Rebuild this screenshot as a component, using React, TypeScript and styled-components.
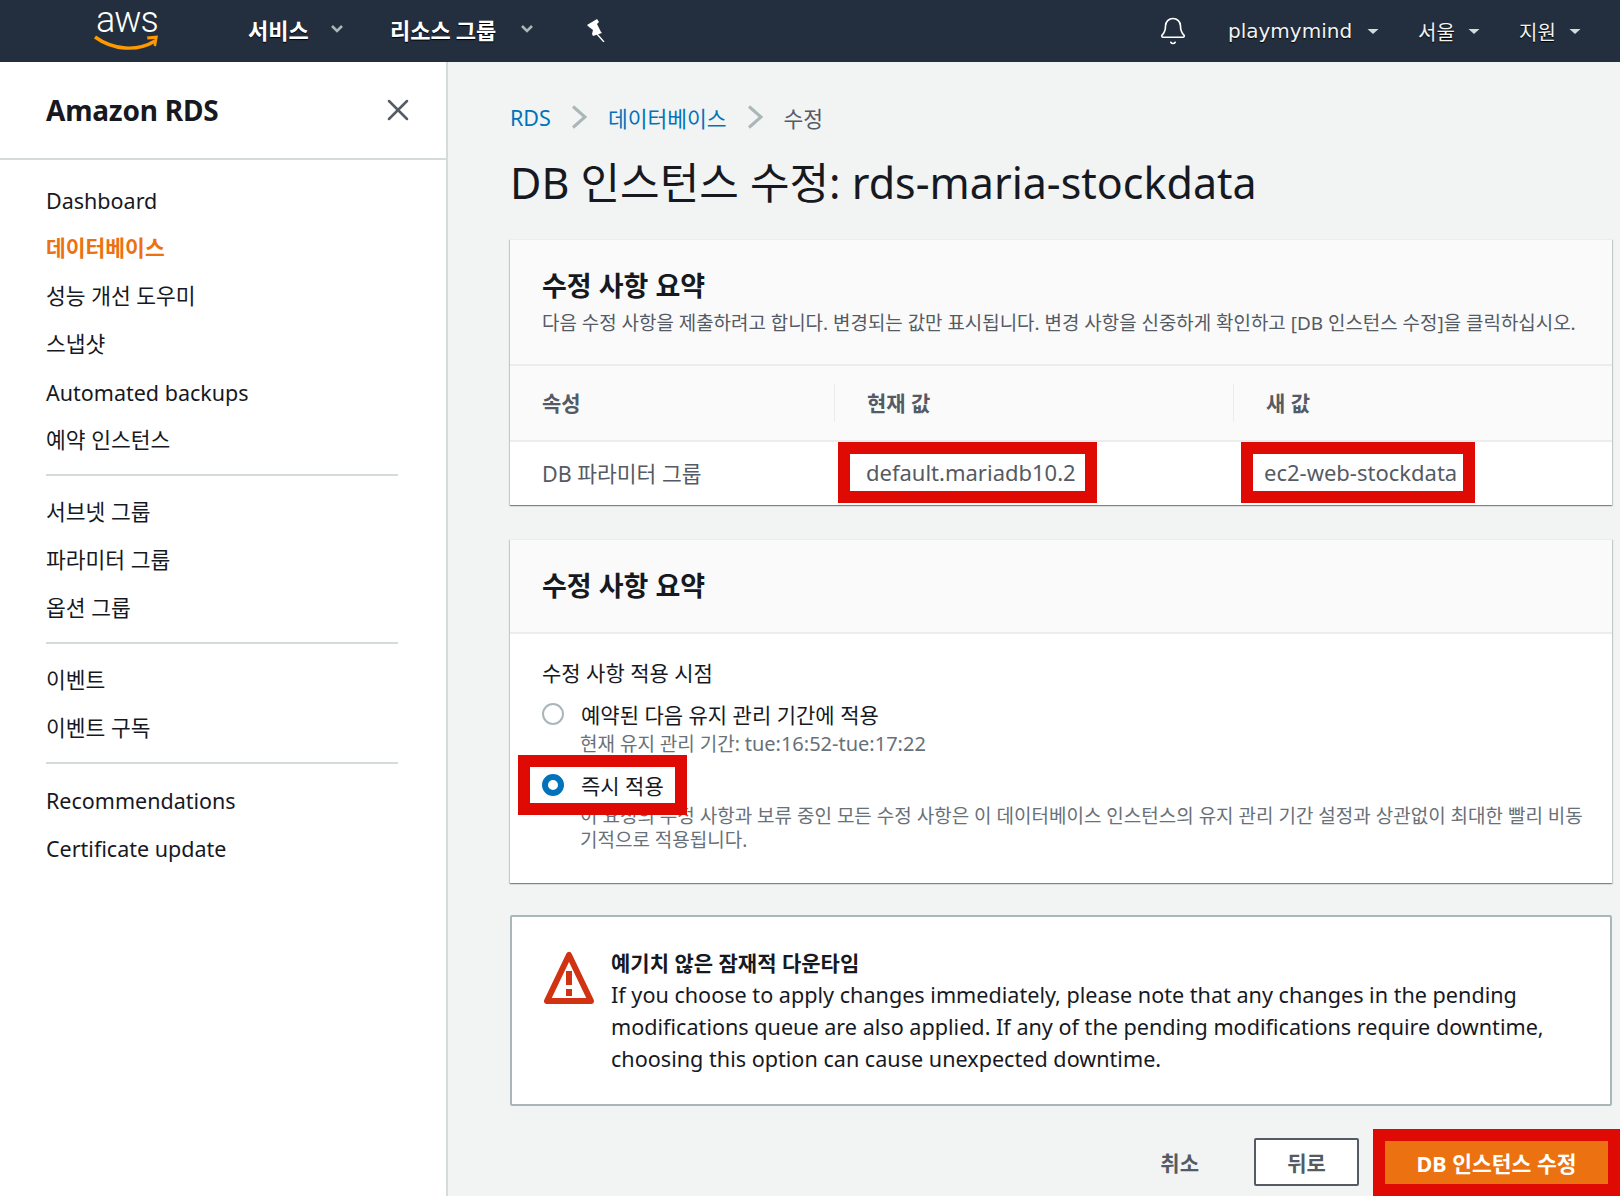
import { ReactNode } from 'react'
import styled, { createGlobalStyle } from 'styled-components'
import { Bell, X } from 'lucide-react'

const GlobalStyle = createGlobalStyle`
  html, body {
    margin: 0;
    padding: 0;
    background: #f2f3f3;
  }
  body {
    font-family: 'Noto Sans', 'Noto Sans CJK KR', sans-serif;
    color: #16191f;
  }
  * {
    box-sizing: border-box;
  }
`

const Page = styled.div`
  width: 1620px;
  height: 1196px;
  overflow: hidden;
  display: grid;
  grid-template-rows: 62px 1fr;
  grid-template-columns: 448px 1fr;
  grid-template-areas:
    'top top'
    'side main';
`

const TopBar = styled.header`
  grid-area: top;
  background: #232f3e;
  display: flex;
  align-items: center;
  color: #fff;
`

const LogoBox = styled.div`
  width: 248px;
  height: 62px;
  padding: 3px 0 0 94px;
  display: flex;
  flex-direction: column;
  align-items: flex-start;
`

const LogoText = styled.span`
  font-family: 'Roboto', sans-serif;
  font-size: 36px;
  font-weight: 300;
  line-height: 34px;
  letter-spacing: -1px;
  margin-left: 2px;
`

const Smile = styled.svg`
  width: 66px;
  height: 20px;
  margin-top: -3px;
`

const TopMenu = styled.button<{ $gap: number; $width: number }>`
  all: unset;
  display: flex;
  align-items: center;
  gap: ${(p) => p.$gap}px;
  width: ${(p) => p.$width}px;
  padding-bottom: 5px;
  font-family: 'Noto Sans CJK KR', sans-serif;
  font-size: 22px;
  font-weight: 700;
  text-shadow: 0 1px 1px #000;
`

const PinIcon = styled.svg`
  width: 18px;
  height: 23px;
  margin: 0 0 2px 3px;
`

const TopRight = styled.div`
  margin-left: auto;
  display: flex;
  align-items: center;
`

const UserMenu = styled.button<{ $width: number; $gap: number }>`
  all: unset;
  display: flex;
  align-items: center;
  gap: ${(p) => p.$gap}px;
  width: ${(p) => p.$width}px;
  font-family: 'DejaVu Sans', 'Noto Sans CJK KR', sans-serif;
  font-size: 20px;
  text-shadow: 0 1px 1px #000;
  color: #f2f3f3;
`

const Side = styled.aside`
  grid-area: side;
  background: #fff;
  border-right: 2px solid #d5dbdb;
`

const SideHead = styled.div`
  height: 98px;
  padding: 0 30px 0 46px;
  display: flex;
  align-items: center;
  justify-content: space-between;
  border-bottom: 2px solid #d5dbdb;
`

const SideTitle = styled.h2`
  margin: 0;
  font-size: 28px;
  font-weight: 700;
  letter-spacing: -0.2px;
`

const SideNav = styled.nav`
  padding-top: 14px;
`

const NavItem = styled.a<{ $active?: boolean; $latin?: boolean }>`
  display: flex;
  align-items: center;
  height: 48px;
  padding: ${(p) => (p.$latin ? '4px' : '0')} 0 0 46px;
  font-size: 21.5px;
  color: ${(p) => (p.$active ? '#ec7211' : '#16191f')};
  font-weight: ${(p) => (p.$active ? 700 : 400)};
`

const NavRule = styled.hr`
  margin: 12px 48px 10px 46px;
  border: 0;
  border-top: 2px solid #d5dbdb;
`

const Main = styled.main`
  grid-area: main;
  padding: 35px 8px 0 62px;
`

const Crumbs = styled.div`
  display: flex;
  align-items: center;
  height: 40px;
  font-size: 21.5px;
`

const CrumbLink = styled.a`
  color: #0073bb;
`

const CrumbNow = styled.span`
  color: #545b64;
`

const CrumbArrow = styled.svg`
  width: 16px;
  height: 24px;
  margin: 0 21px 0 20px;
`

const PageTitle = styled.h1`
  margin: 15px 0 0;
  height: 53px;
  line-height: 62px;
  font-size: 43px;
  font-weight: 400;
`

const Card = styled.section`
  margin-top: 34px;
  background: #fff;
  border-top: 1px solid #eaeded;
  box-shadow: 0 1px 1px 0 rgba(0, 28, 36, 0.3), 1px 1px 1px 0 rgba(0, 28, 36, 0.15),
    -1px 1px 1px 0 rgba(0, 28, 36, 0.15);
`

const CardHead = styled.div<{ $height: number }>`
  height: ${(p) => p.$height}px;
  padding: 0 32px;
  background: #fafafa;
  border-bottom: 2px solid #eaeded;
  display: flex;
  flex-direction: column;
  justify-content: center;
`

const CardTitle = styled.h3`
  margin: 0;
  font-size: 27px;
  line-height: 36px;
  font-weight: 700;
`

const CardDesc = styled.p`
  margin: 5px 0 0;
  font-size: 18.95px;
  line-height: 28px;
  color: #545b64;
  white-space: nowrap;
`

const HeadRow = styled.div`
  display: grid;
  grid-template-columns: 324px 399px 1fr;
  align-items: center;
  height: 76px;
  background: #fafafa;
  border-bottom: 2px solid #eaeded;
`

const HeadCell = styled.div<{ $first?: boolean }>`
  height: 38px;
  line-height: 38px;
  padding-left: 32px;
  border-left: ${(p) => (p.$first ? 0 : '1px solid #eaeded')};
  font-size: 21px;
  font-weight: 700;
  color: #545b64;
`

const ValueRow = styled.div`
  display: grid;
  grid-template-columns: 324px 399px 1fr;
  align-items: center;
  height: 63px;
  padding-bottom: 2px;
  font-size: 22px;
  color: #545b64;
`

const NameCell = styled.div`
  padding-left: 32px;
  font-size: 21.5px;
`

const ValueCell = styled.div<{ $indent: number }>`
  padding-left: ${(p) => p.$indent}px;
`

const Marked = styled.span<{ $width: number; $pad: number }>`
  display: block;
  width: ${(p) => p.$width}px;
  height: 37px;
  line-height: 37px;
  padding-left: ${(p) => p.$pad}px;
  background: #fff;
  outline: 12px solid #e00a05;
  white-space: nowrap;
`

const CardBody = styled.div`
  padding: 24px 24px 31px 32px;
`

const FieldLabel = styled.div`
  font-size: 21px;
  line-height: 30px;
`

const Choice = styled.div`
  margin-top: 11px;
  display: flex;
  align-items: center;
  gap: 17px;
  height: 30px;
  font-size: 21px;
`

const ChosenBox = styled.div`
  margin: 11px 0 0 -12px;
  width: 145px;
  height: 36px;
  padding-left: 12px;
  display: flex;
  align-items: center;
  gap: 17px;
  background: #fff;
  outline: 12px solid #e00a05;
  font-size: 21px;
  position: relative;
`

const Radio = styled.span<{ $on?: boolean }>`
  flex: none;
  width: 22px;
  height: 22px;
  border-radius: 50%;
  background: #fff;
  border: ${(p) => (p.$on ? '6px solid #0073bb' : '2px solid #aab7b8')};
`

const ChoiceNote = styled.div<{ $top: number }>`
  margin: ${(p) => p.$top}px 0 0 38px;
  font-size: 19px;
  line-height: 24px;
  color: #687078;
`

const NoteLatin = styled.span`
  font-size: 20px;
`

const Alert = styled.section`
  margin-top: 32px;
  height: 191px;
  background: #fff;
  border: 2px solid #aab7b8;
  border-radius: 2px;
  padding: 30px 40px 0 32px;
  display: flex;
  gap: 17px;
`

const AlertIcon = styled.svg`
  flex: none;
  width: 50px;
  height: 54px;
  margin-top: 4px;
`

const AlertTitle = styled.div`
  font-size: 21px;
  line-height: 32px;
  font-weight: 700;
`

const AlertText = styled.p`
  margin: 0;
  font-size: 21.6px;
  line-height: 32px;
`

const Actions = styled.div`
  margin: 32px 4px 0 0;
  display: flex;
  justify-content: flex-end;
  align-items: center;
`

const CancelLink = styled.a`
  margin-right: 55px;
  font-size: 21px;
  font-weight: 700;
  color: #545b64;
`

const BackButton = styled.button`
  width: 105px;
  height: 48px;
  margin-right: 26px;
  background: #fff;
  border: 2px solid #545b64;
  border-radius: 2px;
  font: inherit;
  font-size: 21px;
  font-weight: 700;
  color: #545b64;
`

const SubmitButton = styled.button`
  width: 223px;
  height: 43px;
  border: 0;
  background: #ec7211;
  color: #fff;
  font: inherit;
  font-size: 21.5px;
  font-weight: 700;
  outline: 12px solid #e00a05;
`

const Caret = ({ thick }: { thick?: boolean }) => (
  <svg width="14" height="10" viewBox="0 0 14 10">
    {thick ? (
      <path d="M2 2l5 5 5-5" fill="none" stroke="#aab7b8" strokeWidth="2.6" />
    ) : (
      <path d="M1.5 3h11L7 8z" fill="#d5dbdb" />
    )}
  </svg>
)

const Crumb = () => (
  <CrumbArrow viewBox="0 0 16 24">
    <path d="M2 1.500l12 10.500L2 22.500" fill="none" stroke="#aab7b8" strokeWidth="3" />
  </CrumbArrow>
)

const Note = ({ top, children }: { top: number; children: ReactNode }) => (
  <ChoiceNote $top={top}>{children}</ChoiceNote>
)

function App() {
  return (
    <Page>
      <GlobalStyle />
      <TopBar>
        <LogoBox>
          <LogoText>aws</LogoText>
          <Smile viewBox="0 0 66 20">
            <path d="M1 3c18 13 42 15 60 4" fill="none" stroke="#f90" strokeWidth="3.4" />
            <path d="M53 2.500l11-1-2 11-2.500-1 1-6.500-7 .5z" fill="#f90" />
          </Smile>
        </LogoBox>
        <TopMenu $gap={21} $width={142}>
          서비스 <Caret thick />
        </TopMenu>
        <TopMenu $gap={24} $width={194}>
          리소스 그룹 <Caret thick />
        </TopMenu>
        <PinIcon viewBox="0 0 18 23">
          <path d="M0 6L10 0l2 3-2 2 4 8 1 1-9 3-1-2 1-4-4-3z" fill="#fff" />
          <path d="M10 15l7 8" stroke="#fff" strokeWidth="1.4" />
        </PinIcon>
        <TopRight>
          <UserMenu $width={70} $gap={0}>
            <Bell size={30} strokeWidth={1.3} color="#fff" />
          </UserMenu>
          <UserMenu $width={190} $gap={14}>
            playmymind <Caret />
          </UserMenu>
          <UserMenu $width={101} $gap={12}>
            서울 <Caret />
          </UserMenu>
          <UserMenu $width={101} $gap={12}>
            지원 <Caret />
          </UserMenu>
        </TopRight>
      </TopBar>

      <Side>
        <SideHead>
          <SideTitle>Amazon RDS</SideTitle>
          <X size={36} strokeWidth={1.7} color="#545b64" />
        </SideHead>
        <SideNav>
          <NavItem $latin>Dashboard</NavItem>
          <NavItem $active>데이터베이스</NavItem>
          <NavItem>성능 개선 도우미</NavItem>
          <NavItem>스냅샷</NavItem>
          <NavItem $latin>Automated backups</NavItem>
          <NavItem>예약 인스턴스</NavItem>
          <NavRule />
          <NavItem>서브넷 그룹</NavItem>
          <NavItem>파라미터 그룹</NavItem>
          <NavItem>옵션 그룹</NavItem>
          <NavRule />
          <NavItem>이벤트</NavItem>
          <NavItem>이벤트 구독</NavItem>
          <NavRule />
          <NavItem $latin>Recommendations</NavItem>
          <NavItem $latin>Certificate update</NavItem>
        </SideNav>
      </Side>

      <Main>
        <Crumbs>
          <CrumbLink>RDS</CrumbLink>
          <Crumb />
          <CrumbLink>데이터베이스</CrumbLink>
          <Crumb />
          <CrumbNow>수정</CrumbNow>
        </Crumbs>
        <PageTitle>DB 인스턴스 수정: rds-maria-stockdata</PageTitle>

        <Card>
          <CardHead $height={126}>
            <CardTitle>수정 사항 요약</CardTitle>
            <CardDesc>
              다음 수정 사항을 제출하려고 합니다. 변경되는 값만 표시됩니다. 변경 사항을 신중하게 확인하고 [DB 인스턴스 수정]을 클릭하십시오.
            </CardDesc>
          </CardHead>
          <HeadRow>
            <HeadCell $first>속성</HeadCell>
            <HeadCell>현재 값</HeadCell>
            <HeadCell>새 값</HeadCell>
          </HeadRow>
          <ValueRow>
            <NameCell>DB 파라미터 그룹</NameCell>
            <ValueCell $indent={16}>
              <Marked $width={235} $pad={16}>default.mariadb10.2</Marked>
            </ValueCell>
            <ValueCell $indent={20}>
              <Marked $width={210} $pad={11}>ec2-web-stockdata</Marked>
            </ValueCell>
          </ValueRow>
        </Card>

        <Card>
          <CardHead $height={94}>
            <CardTitle>수정 사항 요약</CardTitle>
          </CardHead>
          <CardBody>
            <FieldLabel>수정 사항 적용 시점</FieldLabel>
            <Choice>
              <Radio />
              예약된 다음 유지 관리 기간에 적용
            </Choice>
            <Note top={3}>
              현재 유지 관리 기간: <NoteLatin>tue:16:52-tue:17:22</NoteLatin>
            </Note>
            <ChosenBox>
              <Radio $on />
              즉시 적용
            </ChosenBox>
            <Note top={1}>
              이 요청의 수정 사항과 보류 중인 모든 수정 사항은 이 데이터베이스 인스턴스의 유지 관리 기간 설정과 상관없이 최대한 빨리 비동기적으로 적용됩니다.
            </Note>
          </CardBody>
        </Card>

        <Alert>
          <AlertIcon viewBox="0 0 50 54">
            <path d="M25 4L3 50h44z" fill="none" stroke="#d13212" strokeWidth="6" strokeLinejoin="round" />
            <path d="M22 20h6v14h-6zM22 38h6v7h-6z" fill="#d13212" />
          </AlertIcon>
          <div>
            <AlertTitle>예기치 않은 잠재적 다운타임</AlertTitle>
            <AlertText>
              If you choose to apply changes immediately, please note that any changes in the pending modifications queue are also applied. If any of the pending modifications require downtime, choosing this option can cause unexpected downtime.
            </AlertText>
          </div>
        </Alert>

        <Actions>
          <CancelLink>취소</CancelLink>
          <BackButton>뒤로</BackButton>
          <SubmitButton>DB 인스턴스 수정</SubmitButton>
        </Actions>
      </Main>
    </Page>
  )
}

export default App
